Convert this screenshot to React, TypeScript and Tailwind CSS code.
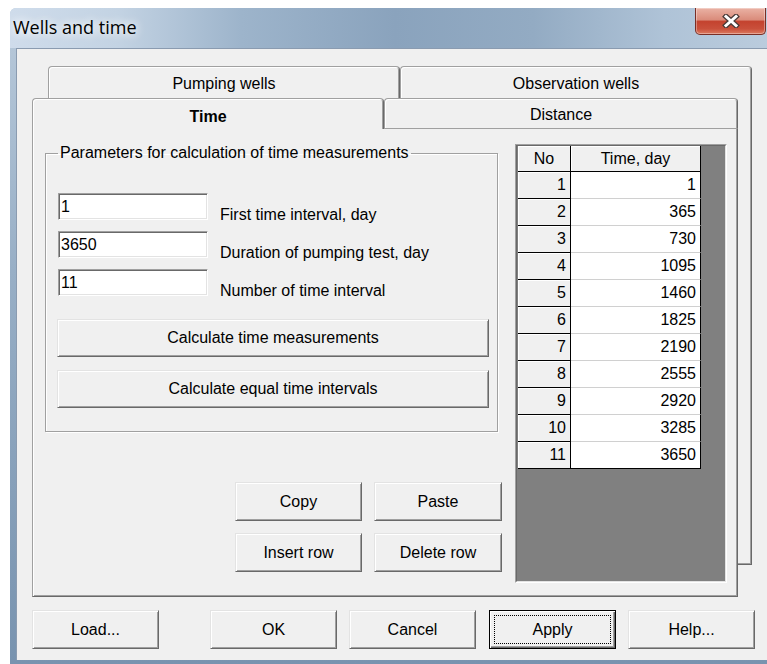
import React from 'react'

const font = "font-['Liberation_Sans',Arial,sans-serif]"

// classic 3D edges
const raised =
  'bg-[#f0f0f0] border border-t-[#e3e3e3] border-l-[#e3e3e3] border-r-[#696969] border-b-[#696969] shadow-[inset_1px_1px_0_#ffffff,inset_-1px_-1px_0_#a0a0a0]'
const sunken =
  'bg-white border border-t-[#a0a0a0] border-l-[#a0a0a0] border-r-white border-b-white shadow-[inset_1px_1px_0_#696969,inset_-1px_-1px_0_#e3e3e3]'
const tabEdge =
  'flex items-center justify-center bg-[#f0f0f0] border-t border-l border-r border-t-[#a0a0a0] border-l-[#a0a0a0] border-r-[#696969] rounded-t-[4px] shadow-[inset_1px_1px_0_#ffffff,inset_-1px_0_0_#a0a0a0]'

const times = [1, 365, 730, 1095, 1460, 1825, 2190, 2555, 2920, 3285, 3650]

function Button({ label, className = '' }: { label: string; className?: string }) {
  return (
    <button
      type="button"
      className={`${raised} flex items-center justify-center text-[16px] leading-[18px] text-black ${className}`}
    >
      {label}
    </button>
  )
}

function Field({ value, label }: { value: string; label: string }) {
  return (
    <div className="flex items-start h-[27px]">
      <input
        readOnly
        value={value}
        className={`${sunken} w-[150px] h-[27px] px-[2px] text-[16px] text-black outline-none`}
      />
      <span className="ml-[12px] mt-[13px] leading-[18px] whitespace-nowrap">{label}</span>
    </div>
  )
}

function TimeGrid() {
  const fixed = 'bg-[#f0f0f0] border-r border-b border-black shadow-[inset_1px_1px_0_#ffffff]'
  return (
    <div className="w-[212px] h-[439px] flex border border-t-[#a0a0a0] border-l-[#a0a0a0] border-r-white border-b-white">
      <div className="flex-1 border border-t-[#696969] border-l-[#696969] border-r-[#e3e3e3] border-b-[#e3e3e3] bg-[#808080] pl-px">
        <div className="grid grid-cols-[53px_130px] w-[183px] text-[16px] leading-[18px] text-black">
          <div className={`${fixed} h-[26px] flex items-center justify-center`}>No</div>
          <div className={`${fixed} h-[26px] flex items-center justify-center`}>Time, day</div>
          {times.map((t, i) => (
            <React.Fragment key={i}>
              <div className={`${fixed} h-[27px] flex items-center justify-end pr-[4px]`}>{i + 1}</div>
              <div
                className={`bg-white border-r border-r-black border-b h-[27px] flex items-center justify-end pr-[4px] ${
                  i === times.length - 1 ? 'border-b-black' : 'border-b-[#d0d0d0]'
                }`}
              >
                {t}
              </div>
            </React.Fragment>
          ))}
        </div>
      </div>
    </div>
  )
}

function CloseButton() {
  return (
    <button
      type="button"
      className="w-[71px] h-[27px] flex items-center justify-center rounded-b-[5px] border border-t-0 border-[#7a2e25] bg-[linear-gradient(180deg,#eab2a4_0%,#da8c7b_45%,#c4432f_52%,#c9503b_80%,#dc7a5f_100%)] shadow-[inset_0_0_0_1px_rgba(255,255,255,0.35)]"
    >
      <svg width="18" height="14" viewBox="0 0 18 14">
        <path d="M4 2.5 L14 11.5 M14 2.5 L4 11.5" stroke="#4a3a38" strokeWidth="5.5" strokeLinecap="square" />
        <path d="M4 2.5 L14 11.5 M14 2.5 L4 11.5" stroke="#ffffff" strokeWidth="3" strokeLinecap="square" />
      </svg>
    </button>
  )
}

export default function App() {
  return (
    <div className={`w-[767px] h-[664px] overflow-hidden bg-white text-[16px] text-black ${font}`}>
      <div className="ml-[10px] mt-[8px] w-[770px] h-[656px] flex flex-col rounded-tl-[6px] bg-[linear-gradient(180deg,#b9cadb_0%,#98afc6_40%,#7893af_100%)]">
        {/* title bar */}
        <div className="h-[40px] flex items-start justify-between rounded-tl-[6px] bg-[linear-gradient(90deg,#cfdceb_0%,#c3d3e3_14%,#9db4cb_30%,#8aa3bd_50%,#93abc3_68%,#afc3d7_85%,#bccdde_100%)]">
          <span className="self-center ml-[3px] pb-[1px] text-[18px] text-black font-['Open_Sans','Noto_Sans',sans-serif] [text-shadow:0_0_8px_#ffffff,0_0_12px_#ffffff]">
            Wells and time
          </span>
          <div className="mr-[14px]">
            <CloseButton />
          </div>
        </div>

        {/* client area */}
        <div className="flex-1 ml-[6px] mr-[6px] mb-[4px] bg-[#f0f0f0] border-t border-l border-[#8a9bb0] pl-[15px] pt-[17px] flex flex-col">
          <div className="flex flex-col">
            {/* back tab row */}
            <div className="flex ml-[16px] h-[32px]">
              <div className={`${tabEdge} w-[352px] pt-[2px]`}>Pumping wells</div>
              <div className={`${tabEdge} w-[352px] pt-[2px]`}>Observation wells</div>
            </div>

            <div className="flex">
              <div className="w-[706px] flex flex-col">
                {/* front tab row */}
                <div className="flex h-[31px]">
                  <div className={`${tabEdge} w-[352px] font-bold pt-[5px]`}>Time</div>
                  <div className={`${tabEdge} w-[354px] border-b border-b-[#a0a0a0] pt-[3px]`}>Distance</div>
                </div>

                {/* page */}
                <div className="h-[468px] flex items-start pl-[12px] pt-[15px] border-l border-r border-b border-l-[#a0a0a0] border-r-[#696969] border-b-[#696969] shadow-[inset_1px_0_0_#ffffff,inset_-1px_-1px_0_#a0a0a0]">
                  <div className="w-[457px] flex flex-col">
                    <fieldset className="w-[453px] border border-[#a0a0a0] shadow-[inset_1px_1px_0_#ffffff,1px_1px_0_#ffffff] pl-[12px] pr-[8px] pb-[23px]">
                      <legend className="px-[2px] leading-[18px]">
                        Parameters for calculation of time measurements
                      </legend>
                      <div className="mt-[31px] flex flex-col gap-[11px]">
                        <Field value="1" label="First time interval, day" />
                        <Field value="3650" label="Duration of pumping test, day" />
                        <Field value="11" label="Number of time interval" />
                      </div>
                      <div className="mt-[23px] -ml-px flex flex-col gap-[13px]">
                        <Button label="Calculate time measurements" className="w-[432px] h-[38px]" />
                        <Button label="Calculate equal time intervals" className="w-[432px] h-[38px]" />
                      </div>
                    </fieldset>

                    <div className="mt-[50px] flex flex-col gap-[12px] items-end">
                      <div className="flex gap-[12px]">
                        <Button label="Copy" className="w-[127px] h-[39px]" />
                        <Button label="Paste" className="w-[128px] h-[39px]" />
                      </div>
                      <div className="flex gap-[12px]">
                        <Button label="Insert row" className="w-[127px] h-[39px]" />
                        <Button label="Delete row" className="w-[128px] h-[39px]" />
                      </div>
                    </div>
                  </div>

                  <div className="ml-[13px]">
                    <TimeGrid />
                  </div>
                </div>
              </div>

              {/* edge of the back page */}
              <div className="w-[14px] h-[467px] border-r border-b border-[#696969] shadow-[inset_-1px_-1px_0_#a0a0a0]" />
            </div>
          </div>

          {/* dialog buttons */}
          <div className="mt-[13px] flex">
            <Button label="Load..." className="w-[127px] h-[39px]" />
            <Button label="OK" className="w-[127px] h-[39px] ml-[51px]" />
            <Button label="Cancel" className="w-[127px] h-[39px] ml-[12px]" />
            <button
              type="button"
              className="ml-[13px] w-[127px] h-[39px] p-[4px] flex bg-[#f0f0f0] border border-black shadow-[inset_1px_1px_0_#ffffff,inset_-1px_-1px_0_#696969,inset_-2px_-2px_0_#a0a0a0]"
            >
              <span className="flex-1 flex items-center justify-center border border-dotted border-black leading-[18px]">
                Apply
              </span>
            </button>
            <Button label="Help..." className="w-[127px] h-[39px] ml-[12px]" />
          </div>
        </div>
      </div>
    </div>
  )
}
